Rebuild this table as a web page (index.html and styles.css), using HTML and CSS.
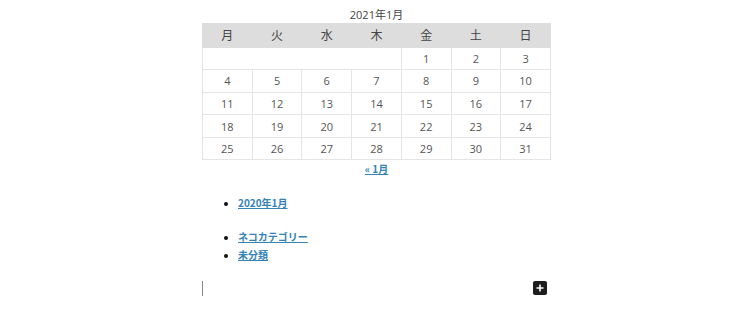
FILE: index.html
```html
<!DOCTYPE html>
<html lang="ja">
<head>
<meta charset="utf-8">
<link rel="stylesheet" href="styles.css">
</head>
<body>
<div class="page">
  <div class="calendar">
    <div class="caption">2021年1月</div>
    <table class="cal">
      <thead>
        <tr><th>月</th><th>火</th><th>水</th><th>木</th><th>金</th><th>土</th><th>日</th></tr>
      </thead>
      <tbody>
        <tr><td colspan="4" class="pad"></td><td>1</td><td>2</td><td>3</td></tr>
        <tr><td>4</td><td>5</td><td>6</td><td>7</td><td>8</td><td>9</td><td>10</td></tr>
        <tr><td>11</td><td>12</td><td>13</td><td>14</td><td>15</td><td>16</td><td>17</td></tr>
        <tr><td>18</td><td>19</td><td>20</td><td>21</td><td>22</td><td>23</td><td>24</td></tr>
        <tr><td>25</td><td>26</td><td>27</td><td>28</td><td>29</td><td>30</td><td>31</td></tr>
      </tbody>
    </table>
    <div class="nav"><a href="#">« 1月</a></div>
  </div>
  <ul class="list first">
    <li><a href="#">2020年1月</a></li>
  </ul>
  <ul class="list second">
    <li><a href="#">ネコカテゴリー</a></li>
    <li><a href="#">未分類</a></li>
  </ul>
  <div class="appender">
    <span class="caret"></span>
    <span class="plus"><svg width="8" height="8" viewBox="0 0 8 8"><path d="M4 0.5v7M0.5 4h7" stroke="#fff" stroke-width="1.6"/></svg></span>
  </div>
</div>
</body>
</html>
```

FILE: styles.css
```css
html, body {
  margin: 0;
  padding: 0;
  background: #fff;
}
.page {
  width: 349px;
  margin-left: 202px;
  padding-top: 6px;
  font-family: "Open Sans", "Noto Sans CJK JP", sans-serif;
}
.caption {
  text-align: center;
  font-size: 11px;
  line-height: 17px;
  color: #444;
}
.cal {
  width: 349px;
  border-collapse: collapse;
  table-layout: fixed;
  font-size: 11px;
  color: #555;
}
.cal th {
  background: #dddddd;
  font-weight: normal;
  height: 22.5px;
  padding: 0;
  color: #444;
  font-size: 12px;
  border: 1px solid #dddddd;
}
.cal td {
  text-align: center;
  height: 21.6px;
  padding: 0;
  border: 1px solid #e5e5e5;
}
.nav {
  text-align: center;
  padding-top: 1px;
  font-size: 10px;
  line-height: 16px;
}
a {
  color: #3582b5;
  text-decoration: underline;
  font-family: "Noto Sans CJK JP", sans-serif;
  font-weight: 700;
}
.list {
  margin: 0;
  padding-left: 36px;
  font-size: 10px;
  line-height: 17px;
}
.list li::marker {
  color: #111;
  font-size: 10px;
}
.list.first {
  margin-top: 17px;
}
.list.second {
  margin-top: 16px;
}
.appender {
  display: flex;
  justify-content: space-between;
  align-items: center;
  margin-top: 17px;
  width: 345px;
}
.caret {
  width: 1px;
  height: 15px;
  background: #888;
}
.plus {
  width: 14px;
  height: 14px;
  background: #1e1e1e;
  border-radius: 2px;
  display: flex;
  align-items: center;
  justify-content: center;
  margin-top: -2px;
}
```
